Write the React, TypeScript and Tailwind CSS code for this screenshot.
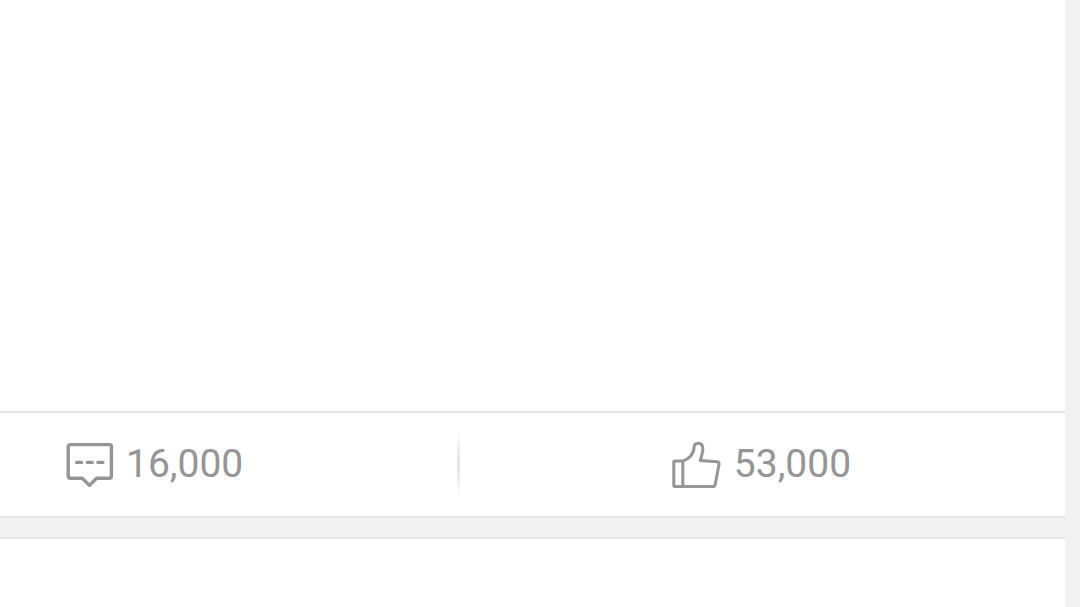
import React from 'react';

interface StatProps {
    label: string;
    value: number;
    icon: React.ReactNode;
    className: string;
}

const CommentIcon: React.FC = () => (
    <svg
        width="48"
        height="48"
        viewBox="0 0 48 48"
        fill="none"
        stroke="currentColor"
        strokeWidth="3.4"
        strokeLinecap="round"
        strokeLinejoin="round"
        aria-hidden="true"
    >
        <path d="M4.2 4.6H43.4a2 2 0 0 1 2 2V36.3a2 2 0 0 1-2 2H30.6L23.4 45.400 16.2 38.3H4.2a2 2 0 0 1-2-2V6.6a2 2 0 0 1 2-2Z" />
        <path d="M10.6 22.4h5M21.3 22.4h5M31.9 22.4h5" />
    </svg>
);

const LikeIcon: React.FC = () => (
    <svg
        width="50"
        height="48"
        viewBox="0 0 50 48"
        fill="none"
        stroke="currentColor"
        strokeWidth="3"
        strokeLinecap="round"
        strokeLinejoin="round"
        aria-hidden="true"
    >
        <path d="M10.8 21H2.6a.8.8 0 0 0-.8.8V45.7a.8.8 0 0 0 .8.8H41a2.2 2.2 0 0 0 2.200-1.800L47 24.200a2.100 2.100 0 0 0-2-2.500L28.200 20.400C29.300 17 31 12.500 30.800 8.200 30.700 4.900 28.800 3.200 26.300 3.200 23.500 3.200 22 5 22 7.800 22 13.500 17 19.400 10.800 21V46" />
    </svg>
);

const Stat: React.FC<StatProps> = ({ label, value, icon, className }) => (
    <button type="button" aria-label={label} className={`flex items-center ${className}`}>
        {icon}
        <span>{value.toLocaleString('en-US')}</span>
    </button>
);

const App: React.FC = () => {
    return (
        <div className="flex h-screen flex-col overflow-hidden bg-[#f1f1f1] pr-[15px] font-['Roboto',sans-serif]">
            <article className="flex flex-1 flex-col border-b-2 border-[#e5e5e5] bg-white">
                <div className="flex-1" />
                <footer className="flex h-[105px] items-stretch border-t-2 border-[#e5e5e5] pb-px text-[39px] leading-[48px] text-[#959595]">
                    <Stat
                        label="Comments"
                        value={16000}
                        icon={<CommentIcon />}
                        className="w-[457px] gap-3 pl-[66px]"
                    />
                    <div className="my-4 w-[3px] bg-linear-to-b from-transparent via-[#e2e2e2] to-transparent" />
                    <Stat
                        label="Likes"
                        value={53000}
                        icon={<LikeIcon />}
                        className="flex-1 justify-center gap-3 pr-0.5"
                    />
                </footer>
            </article>
            <article className="mt-[19px] h-[70px] border-t-2 border-[#e5e5e5] bg-white" />
        </div>
    );
};

export default App;
